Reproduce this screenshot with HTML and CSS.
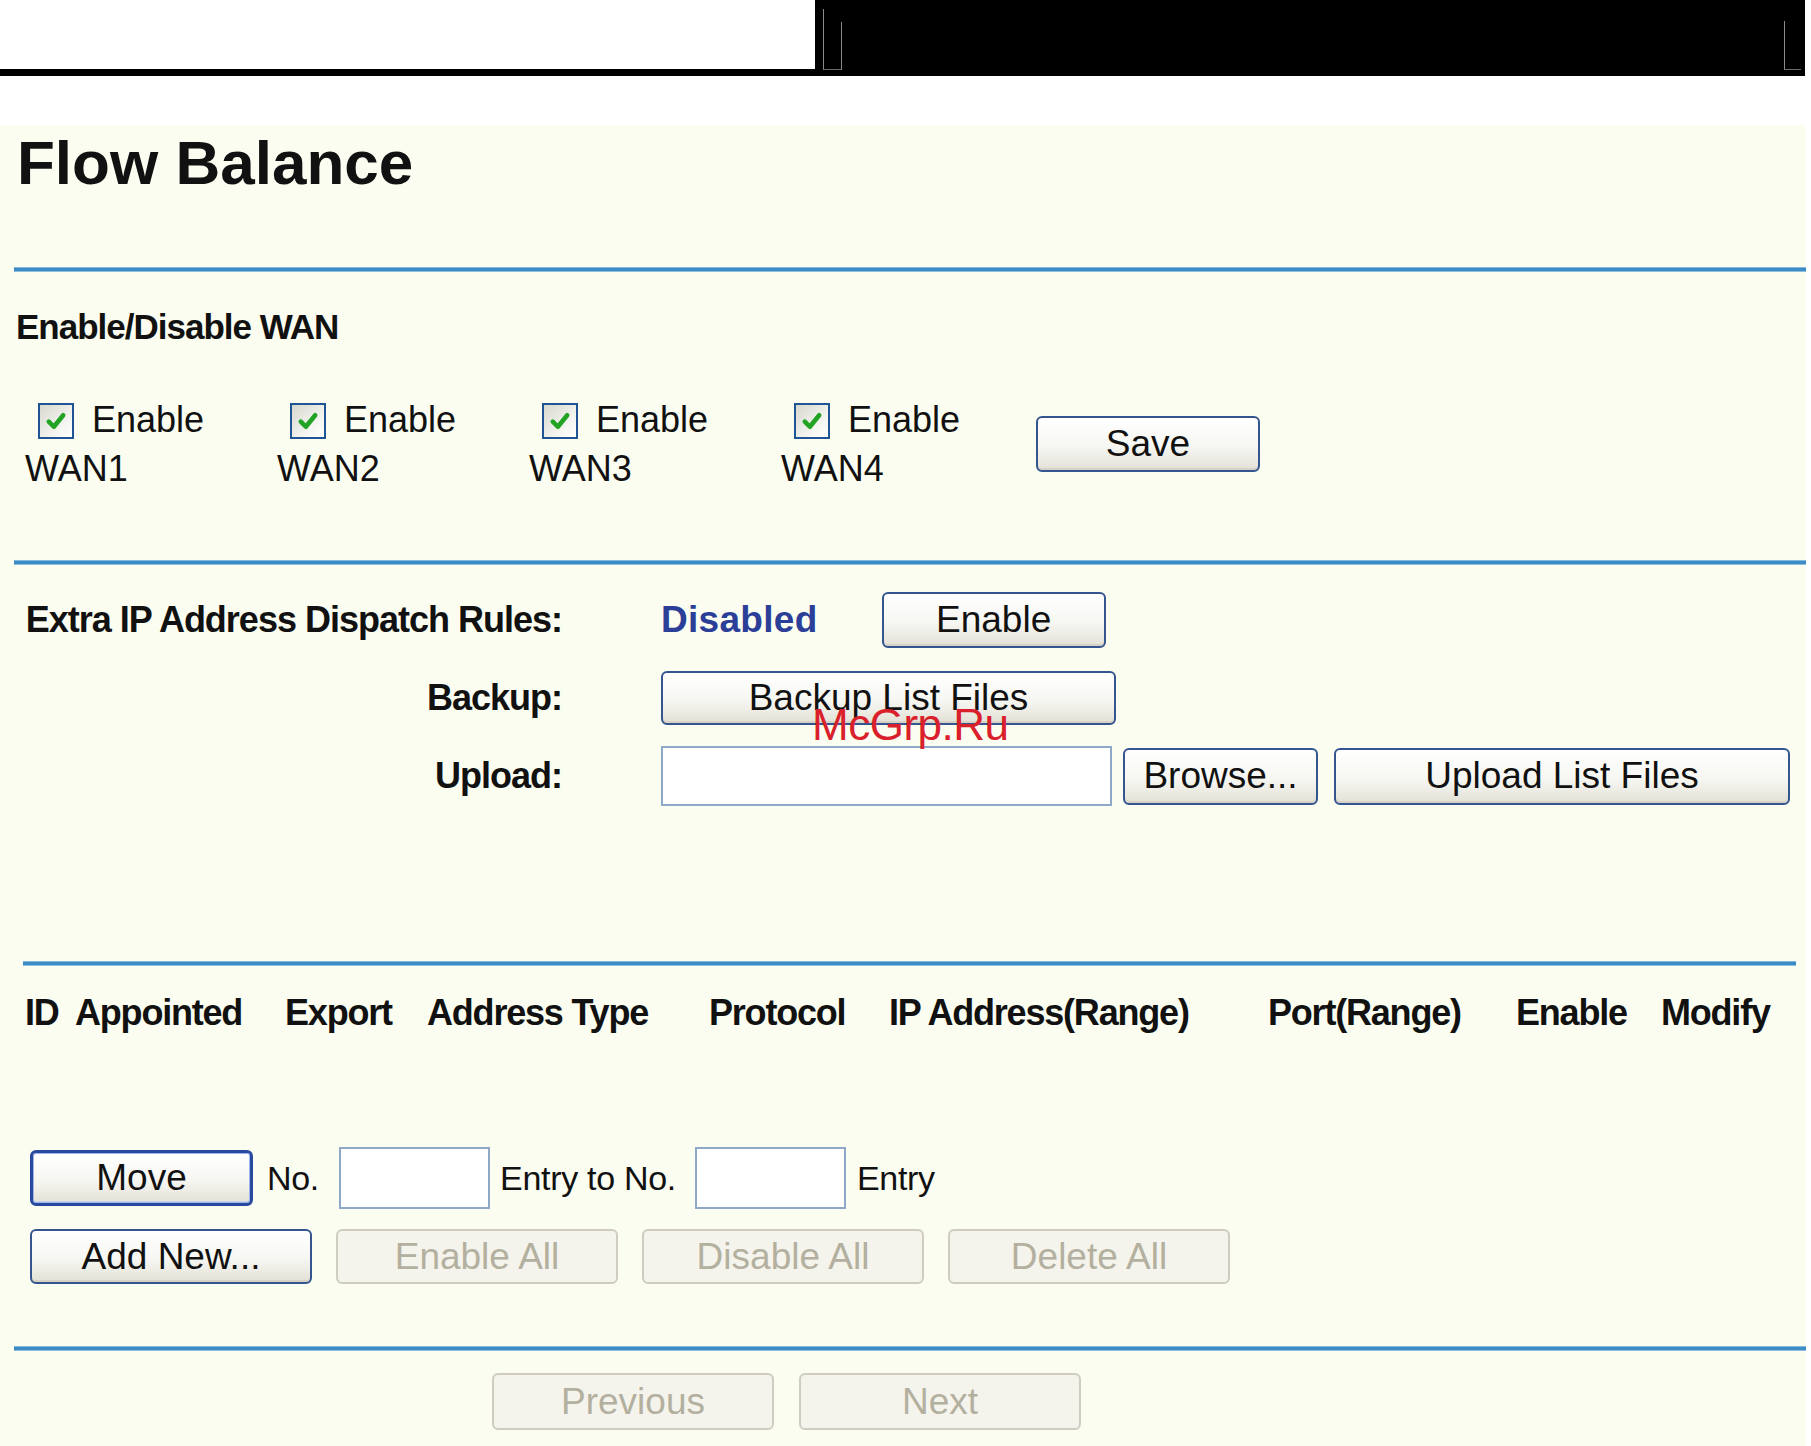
FILE: index.html
```html
<!DOCTYPE html>
<html lang="en">
<head>
    <meta charset="UTF-8">
    <title>Flow Balance</title>
    <link rel="stylesheet" href="styles.css">
</head>
<body>
    <div class="top">
        <div class="top-left"></div>
        <div class="top-dark">
            <div class="bracket-left"></div>
            <div class="line-left"></div>
            <div class="bracket-right"></div>
        </div>
    </div>

    <div class="panel">
        <h1 class="title">Flow Balance</h1>
        <div class="rule"></div>

        <div class="section-title">Enable/Disable WAN</div>
        <div class="wan-row">
            <div class="wan">
                <div class="wan-top"><span class="check"><svg viewBox="0 0 20 20" width="24" height="24"><path d="M4 10.5 L8.2 14.8 L16 5.2" fill="none" stroke="#22a323" stroke-width="3.8" stroke-linecap="round" stroke-linejoin="round"/></svg></span>Enable</div>
                <div class="wan-name">WAN1</div>
            </div>
            <div class="wan">
                <div class="wan-top"><span class="check"><svg viewBox="0 0 20 20" width="24" height="24"><path d="M4 10.5 L8.2 14.8 L16 5.2" fill="none" stroke="#22a323" stroke-width="3.8" stroke-linecap="round" stroke-linejoin="round"/></svg></span>Enable</div>
                <div class="wan-name">WAN2</div>
            </div>
            <div class="wan">
                <div class="wan-top"><span class="check"><svg viewBox="0 0 20 20" width="24" height="24"><path d="M4 10.5 L8.2 14.8 L16 5.2" fill="none" stroke="#22a323" stroke-width="3.8" stroke-linecap="round" stroke-linejoin="round"/></svg></span>Enable</div>
                <div class="wan-name">WAN3</div>
            </div>
            <div class="wan">
                <div class="wan-top"><span class="check"><svg viewBox="0 0 20 20" width="24" height="24"><path d="M4 10.5 L8.2 14.8 L16 5.2" fill="none" stroke="#22a323" stroke-width="3.8" stroke-linecap="round" stroke-linejoin="round"/></svg></span>Enable</div>
                <div class="wan-name">WAN4</div>
            </div>
            <button class="btn btn-save">Save</button>
        </div>

        <div class="rule rule-2"></div>

        <div class="rules">
            <div class="rules-row row-1">
                <div class="label">Extra IP Address Dispatch Rules:</div>
                <div class="status">Disabled</div>
                <button class="btn btn-enable">Enable</button>
            </div>
            <div class="rules-row row-2">
                <div class="label">Backup:</div>
                <button class="btn btn-backup">Backup List Files</button>
            </div>
            <div class="rules-row row-3">
                <div class="label">Upload:</div>
                <input class="field field-file" type="text">
                <button class="btn btn-browse">Browse...</button>
                <button class="btn btn-upload">Upload List Files</button>
            </div>
        </div>

        <div class="rule rule-3"></div>

        <div class="head">
            <span>ID</span>
            <span>Appointed</span>
            <span>Export</span>
            <span>Address Type</span>
            <span>Protocol</span>
            <span>IP Address(Range)</span>
            <span>Port(Range)</span>
            <span>Enable</span>
            <span>Modify</span>
        </div>

        <div class="move-row">
            <button class="btn btn-move">Move</button>
            <span class="t-no">No.</span>
            <input class="field field-no" type="text">
            <span class="t-entry-to">Entry to No.</span>
            <input class="field field-no2" type="text">
            <span class="t-entry">Entry</span>
        </div>

        <div class="actions">
            <button class="btn btn-wide">Add New...</button>
            <button class="btn btn-wide btn-off">Enable All</button>
            <button class="btn btn-wide btn-off">Disable All</button>
            <button class="btn btn-wide btn-off">Delete All</button>
        </div>

        <div class="rule rule-4"></div>

        <div class="pager">
            <button class="btn btn-wide btn-off">Previous</button>
            <button class="btn btn-wide btn-off">Next</button>
        </div>

        <div class="watermark">McGrp.Ru</div>
    </div>
</body>
</html>
```

FILE: styles.css
```css
body {
    margin: 0;
    background: #fff;
    font-family: "Liberation Sans", Arial, sans-serif;
    color: #000;
    width: 1811px;
    height: 1446px;
    overflow: hidden;
}

/* top strip */
.top {
    display: flex;
    height: 76px;
}
.top-left {
    width: 815px;
    height: 69px;
    border-bottom: 7px solid #000;
}
.top-dark {
    display: flex;
    align-items: flex-end;
    width: 990px;
    height: 76px;
    padding-bottom: 6px;
    box-sizing: border-box;
    background: #000;
}
.bracket-left {
    width: 17px;
    height: 60px;
    margin-left: 8px;
    border-left: 1px solid #8a8a8a;
    border-bottom: 1px solid #6a6a6a;
}
.line-left {
    width: 1px;
    height: 48px;
    background: #8a8a8a;
}
.bracket-right {
    width: 16px;
    height: 48px;
    margin-left: auto;
    margin-right: 4px;
    border-left: 1px solid #8a8a8a;
    border-bottom: 1px solid #6a6a6a;
}

/* main panel */
.panel {
    position: relative;
    margin-top: 49px;
    width: 1806px;
    height: 1321px;
    background: #fafdf0;
}

.title {
    margin: 0;
    padding: 3px 0 0 17px;
    font-size: 62px;
    line-height: 70px;
    font-weight: bold;
    color: #111;
}

.rule {
    height: 5px;
    margin-left: 14px;
    background: linear-gradient(#a9d0ea, #3a8bc6 30%, #3a8bc6 70%, #b7d8ec);
    margin-top: 69px;
}
.rule-2 { margin-top: 67px; }
.rule-3 { margin-top: 155px; margin-left: 23px; width: 1773px; }
.rule-4 { margin-top: 62px; }

.section-title {
    margin-top: 35px;
    padding-left: 16px;
    font-size: 35px;
    line-height: 40px;
    font-weight: bold;
    letter-spacing: -1px;
    color: #111;
}

/* WAN checkboxes */
.wan-row {
    display: flex;
    align-items: center;
    margin-top: 48px;
    padding-left: 25px;
}
.wan {
    width: 252px;
    font-size: 36px;
    color: #111;
}
.wan-top {
    display: flex;
    align-items: center;
    height: 49px;
}
.wan-name {
    height: 49px;
    line-height: 49px;
}
.check {
    display: flex;
    align-items: center;
    justify-content: center;
    box-sizing: border-box;
    width: 36px;
    height: 36px;
    margin: 2px 18px 0 13px;
    border: 2px solid #1f5495;
    background: linear-gradient(135deg, #d8d8d0, #f6f6f2 70%, #fff);
}

/* buttons */
.btn {
    box-sizing: border-box;
    height: 56px;
    padding: 0;
    font-family: "Liberation Sans", Arial, sans-serif;
    font-size: 37px;
    color: #111;
    border: 2px solid #34558f;
    border-radius: 6px;
    background: linear-gradient(#ffffff, #f6f6f2 55%, #e3e1d6);
    box-shadow: inset 0 -2px 0 #d6d3c6;
}
.btn-save { width: 224px; margin-left: 3px; }
.btn-enable { width: 224px; margin-left: 64px; }
.btn-backup { width: 455px; height: 54px; }
.btn-browse { width: 195px; height: 57px; margin-left: 11px; }
.btn-upload { width: 456px; height: 57px; margin-left: 16px; }
.btn-move {
    width: 223px;
    border: 3px solid #2a4aa0;
    box-shadow: inset 0 0 0 1px #9db5e8, inset 0 -2px 0 #c9d4ee;
}
.btn-wide { width: 282px; height: 55px; }
.btn-off {
    color: #b3b09f;
    border-color: #cfcdc0;
    background: #f5f4ec;
    box-shadow: none;
}

/* dispatch rules */
.rules-row {
    display: flex;
    align-items: center;
}
.row-1 { margin-top: 27px; height: 56px; }
.row-2 { margin-top: 23px; height: 54px; }
.row-3 { margin-top: 21px; height: 60px; }
.label {
    width: 562px;
    margin-right: 99px;
    text-align: right;
    font-size: 36px;
    font-weight: bold;
    letter-spacing: -1px;
    color: #111;
}
.status {
    font-size: 37px;
    font-weight: bold;
    color: #2b3e98;
    letter-spacing: 0.3px;
}
.field {
    box-sizing: border-box;
    border: 2px solid #8fa8c8;
    background: #fff;
    padding: 0;
}
.field-file { width: 451px; height: 60px; }

/* list head */
.head {
    display: grid;
    grid-template-columns: 50px 210px 142px 282px 180px 379px 248px 145px auto;
    margin-top: 26px;
    padding-left: 25px;
    font-size: 36px;
    line-height: 42px;
    font-weight: bold;
    letter-spacing: -1.2px;
    color: #111;
}

/* move row */
.move-row {
    display: flex;
    align-items: center;
    height: 62px;
    margin-top: 113px;
    padding-left: 30px;
    font-size: 34px;
    color: #111;
    letter-spacing: -0.3px;
}
.t-no { margin-left: 14px; }
.field-no { width: 151px; height: 62px; margin-left: 20px; }
.t-entry-to { margin-left: 10px; }
.field-no2 { width: 151px; height: 62px; margin-left: 19px; }
.t-entry { margin-left: 11px; }

.actions {
    display: flex;
    gap: 24px;
    margin-top: 20px;
    padding-left: 30px;
}

.pager {
    display: flex;
    gap: 25px;
    margin-top: 22px;
    padding-left: 492px;
}
.pager .btn { height: 57px; }

.watermark {
    position: absolute;
    left: 812px;
    top: 575px;
    font-size: 44px;
    line-height: 50px;
    color: #d9202b;
    letter-spacing: -0.5px;
}
```
